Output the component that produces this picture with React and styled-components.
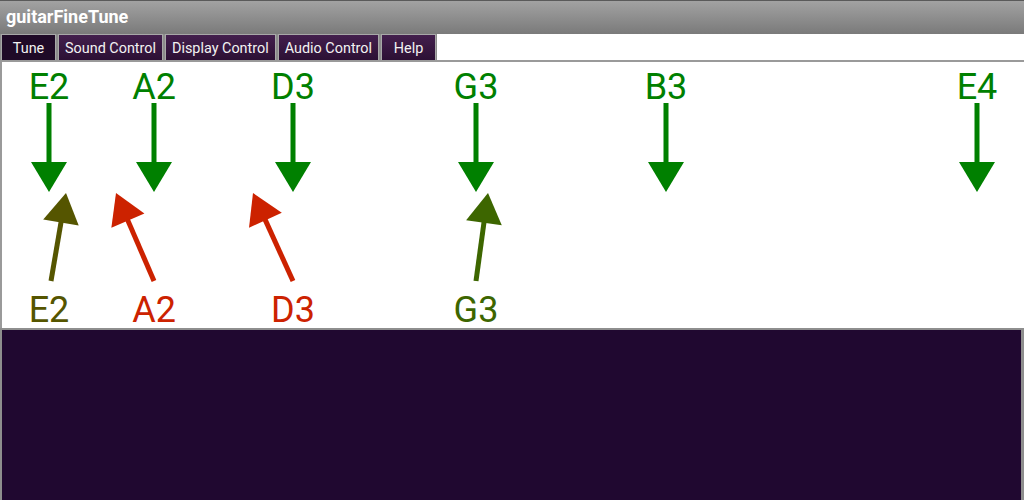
import React from "react";
import styled, { createGlobalStyle } from "styled-components";

const GlobalStyle = createGlobalStyle`
  html, body {
    margin: 0;
    padding: 0;
    background: #ffffff;
    overflow: hidden;
  }
  body {
    font-family: Roboto, "Liberation Sans", Arial, sans-serif;
  }
`;

const GREEN = "#008000";
const OLIVE = "#555500";
const RED = "#cc2200";
const LEAF = "#3d6600";

// target notes with their x position on the scale
const targets = [
  { note: "E2", x: 49 },
  { note: "A2", x: 154 },
  { note: "D3", x: 293 },
  { note: "G3", x: 476 },
  { note: "B3", x: 666 },
  { note: "E4", x: 977 },
];

// detected notes: tail at the label, tip pointing to where the pitch is
const detected = [
  { note: "E2", x: 49, tail: [51, 281], tip: [66, 193], color: OLIVE },
  { note: "A2", x: 154, tail: [154, 281], tip: [116, 193], color: RED },
  { note: "D3", x: 293, tail: [293, 281], tip: [253, 193], color: RED },
  { note: "G3", x: 476, tail: [476, 281], tip: [488, 193], color: LEAF },
];

const tabs = ["Tune", "Sound Control", "Display Control", "Audio Control", "Help"];

function DownArrow({ x, color }) {
  return (
    <g fill={color}>
      <rect x={x - 2.5} y={103} width={5} height={60} />
      <polygon points={`${x - 18},162 ${x + 18},162 ${x},192`} />
    </g>
  );
}

function PointerArrow({ tail, tip, color }) {
  const [tx, ty] = tail;
  const [px, py] = tip;
  const dx = px - tx;
  const dy = py - ty;
  const len = Math.sqrt(dx * dx + dy * dy);
  const ux = dx / len;
  const uy = dy / len;
  const headLen = 30;
  const half = 18;
  const bx = px - ux * headLen;
  const by = py - uy * headLen;
  const nx = -uy;
  const ny = ux;
  return (
    <g>
      <line x1={tx} y1={ty} x2={bx + ux} y2={by + uy} stroke={color} strokeWidth={5} />
      <polygon
        fill={color}
        points={`${px},${py} ${bx + nx * half},${by + ny * half} ${bx - nx * half},${by - ny * half}`}
      />
    </g>
  );
}

function App() {
  return (
    <>
      <GlobalStyle />
      <Page>
        <TitleBar>guitarFineTune</TitleBar>
        <TabBar>
          <TabGroup>
            {tabs.map((t, i) => (
              <Tab key={t} active={i === 0}>
                {t}
              </Tab>
            ))}
          </TabGroup>
        </TabBar>
        <TunerPanel>
          <svg width="1022" height="266" viewBox="2 62 1022 266">
            {targets.map((t) => (
              <g key={"t" + t.note}>
                <NoteLabel x={t.x} y={99} fill={GREEN}>
                  {t.note}
                </NoteLabel>
                <DownArrow x={t.x} color={GREEN} />
              </g>
            ))}
            {detected.map((d) => (
              <g key={"d" + d.note}>
                <PointerArrow tail={d.tail} tip={d.tip} color={d.color} />
                <NoteLabel x={d.x} y={322} fill={d.color}>
                  {d.note}
                </NoteLabel>
              </g>
            ))}
          </svg>
        </TunerPanel>
        <WavePanel />
      </Page>
    </>
  );
}

const Page = styled.div`
  width: 1024px;
  height: 500px;
  display: flex;
  flex-direction: column;
`;

const TitleBar = styled.header`
  height: 33px;
  border-top: 1px solid #5a5a5a;
  background: linear-gradient(#a2a2a2, #7a7a7a);
  color: #ffffff;
  font-weight: 700;
  font-size: 18px;
  line-height: 32px;
  padding-left: 6px;
`;

const TabBar = styled.nav`
  height: 26px;
  display: flex;
  background: #ffffff;
  border-bottom: 2px solid #9a9a9a;
`;

const TabGroup = styled.div`
  display: flex;
  gap: 2px;
  padding: 0 1px 0 1px;
  background: #8c8c8c;
`;

const Tab = styled.div`
  min-width: 55px;
  padding: 0 6px;
  box-sizing: border-box;
  display: flex;
  align-items: center;
  justify-content: center;
  font-size: 14.4px;
  padding-top: 1px;
  color: #f2f2f2;
  border: 1px solid #a8a8a8;
  border-bottom: none;
  background: ${(p) =>
    p.active ? "#1f0a27" : "linear-gradient(#431f4d, #2c1034)"};
`;

const TunerPanel = styled.section`
  height: 266px;
  border-left: 2px solid #9a9a9a;
  background: #ffffff;
  svg {
    display: block;
    overflow: visible;
  }
`;

const NoteLabel = styled.text`
  font-family: Roboto, "Liberation Sans", Arial, sans-serif;
  font-size: 36px;
  text-anchor: middle;
`;

const WavePanel = styled.section`
  flex: 1;
  background: #200830;
  border: 2px solid #8e8e8e;
  border-bottom: none;
  border-right-width: 3px;
`;

export default App;
